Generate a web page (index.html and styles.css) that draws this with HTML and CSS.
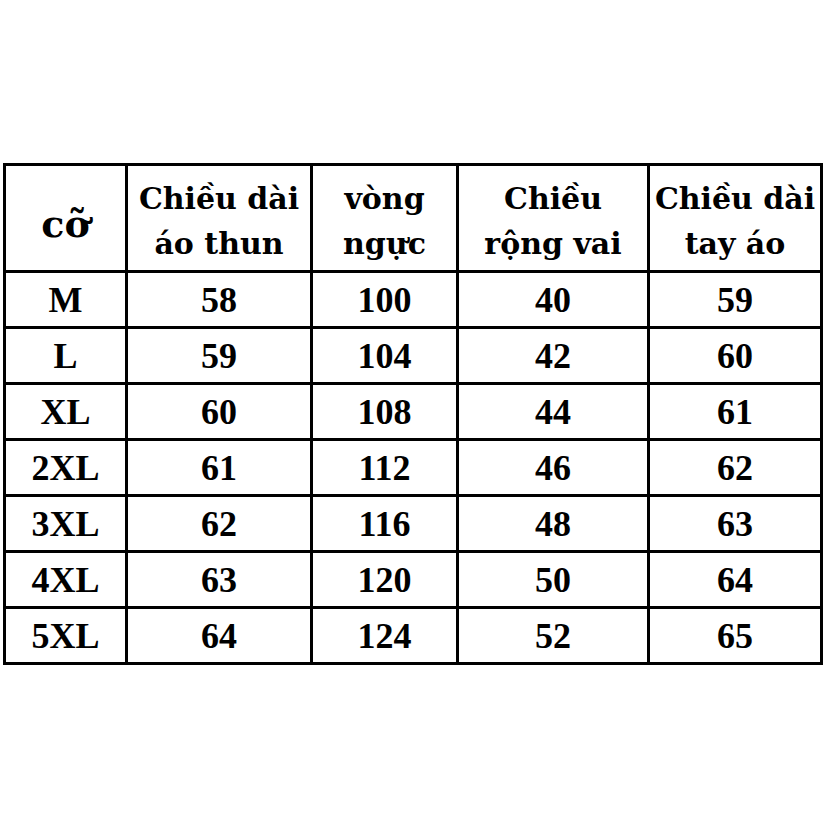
FILE: index.html
```html
<!DOCTYPE html>
<html lang="vi">
<head>
<meta charset="utf-8">
<title>Bảng size</title>
<link rel="stylesheet" href="styles.css">
</head>
<body>
<div class="page">
  <div class="sizes">
    <div class="cell head head-size">cỡ</div>
    <div class="cell head">Chiều dài<br>áo thun</div>
    <div class="cell head">vòng<br>ngực</div>
    <div class="cell head">Chiều<br>rộng vai</div>
    <div class="cell head">Chiều dài<br>tay áo</div>

    <div class="cell">M</div><div class="cell">58</div><div class="cell">100</div><div class="cell">40</div><div class="cell">59</div>
    <div class="cell">L</div><div class="cell">59</div><div class="cell">104</div><div class="cell">42</div><div class="cell">60</div>
    <div class="cell">XL</div><div class="cell">60</div><div class="cell">108</div><div class="cell">44</div><div class="cell">61</div>
    <div class="cell">2XL</div><div class="cell">61</div><div class="cell">112</div><div class="cell">46</div><div class="cell">62</div>
    <div class="cell">3XL</div><div class="cell">62</div><div class="cell">116</div><div class="cell">48</div><div class="cell">63</div>
    <div class="cell">4XL</div><div class="cell">63</div><div class="cell">120</div><div class="cell">50</div><div class="cell">64</div>
    <div class="cell">5XL</div><div class="cell">64</div><div class="cell">124</div><div class="cell">52</div><div class="cell">65</div>
  </div>
</div>
</body>
</html>
```

FILE: styles.css
```css
html, body {
  margin: 0;
  padding: 0;
  background: #fff;
}

.page {
  padding: 163px 0 0 3px;
}

.sizes {
  width: 814px;
  display: grid;
  grid-template-columns: 119px 182px 143px 188px 170px;
  grid-template-rows: 104px repeat(7, 53px);
  gap: 3px;
  padding: 3px;
  background: #000;
}

.cell {
  background: #fff;
  display: flex;
  align-items: center;
  justify-content: center;
  text-align: center;
  font-family: "Liberation Serif", "Times New Roman", serif;
  font-weight: bold;
  font-size: 36px;
  color: #000;
  line-height: 1;
}

.head {
  font-family: "DejaVu Serif", "Liberation Serif", serif;
  font-size: 30px;
  line-height: 45px;
  padding-top: 6px;
}

.head-size {
  font-size: 38px;
  padding-top: 10px;
}
```
